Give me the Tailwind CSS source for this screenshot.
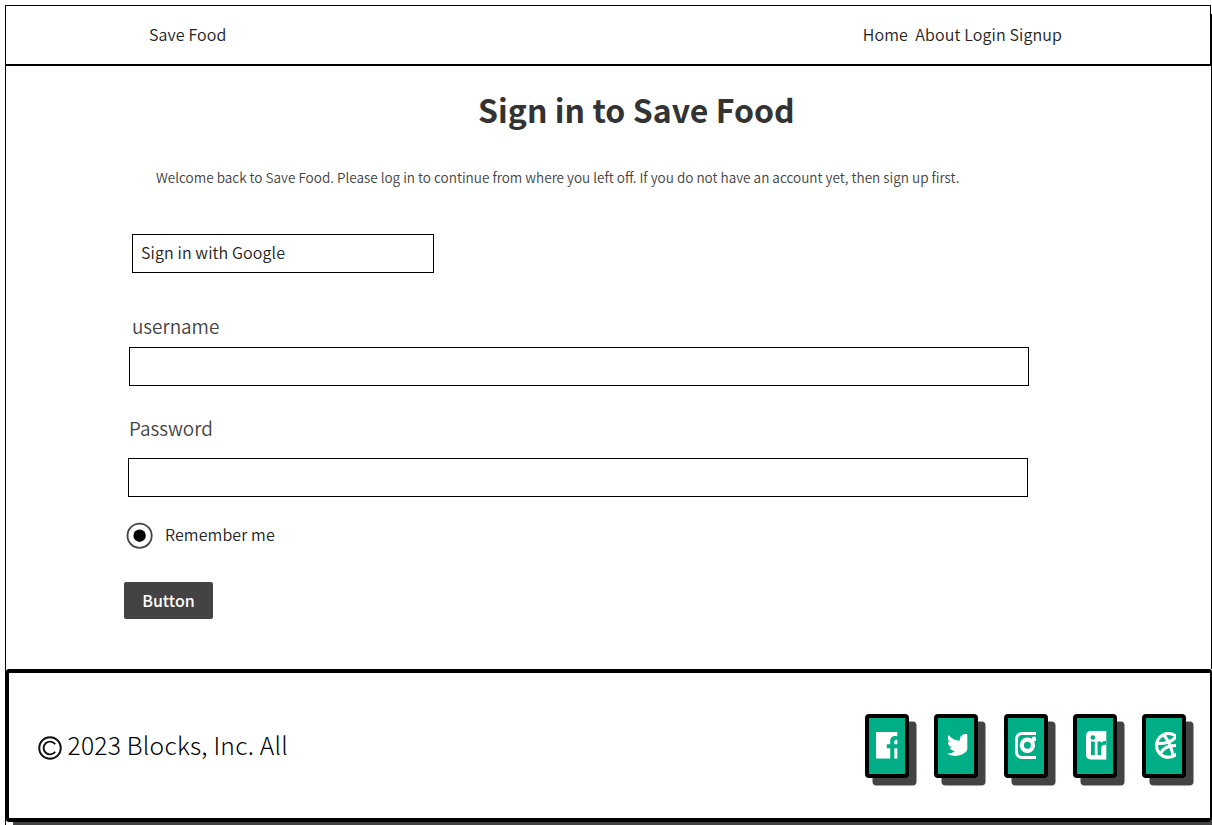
<!DOCTYPE html>
<html lang="en">
<head>
<meta charset="utf-8">
<title>Save Food</title>
<script src="https://cdn.jsdelivr.net/npm/@tailwindcss/browser@4"></script>
</head>
<body class="bg-white">
<div class="flex h-[825px] w-[1212px] flex-col overflow-hidden pt-[5px] pl-[5px] font-['Noto_Sans_CJK_JP','Noto_Sans_CJK_SC',sans-serif] font-[350] text-[#222]">
  <header class="flex h-[61px] shrink-0">
    <nav class="flex w-[1206px] items-center justify-between border border-b-2 border-black pr-[148px] pb-[2px] pl-[143px] text-base leading-6 tracking-[0.12px] whitespace-pre">
      <a>Save Food</a>
      <span>Home  About Login Signup</span>
    </nav>
    <div class="mt-[9px] w-px bg-black"></div>
  </header>
  <main class="h-[603px] shrink-0 border-x border-black pl-[118px]">
    <h1 class="ml-[354px] pt-[19px] text-[32px] leading-[48px] font-bold tracking-[0.04px] whitespace-nowrap text-[#333]">Sign in to Save Food</h1>
    <p class="mt-[34px] ml-[32px] text-[13.55px] leading-5 whitespace-nowrap text-[#444]">Welcome back to Save Food. Please log in to continue from where you left off. If you do not have an account yet, then sign up first.</p>
    <div class="mt-[47px] ml-2 flex h-[39px] w-[302px] items-center border border-black pb-[3px] pl-2 text-base tracking-[0.11px]">Sign in with Google</div>
    <label class="mt-[39px] ml-2 block text-[18.9px] leading-7 text-[#444]">username</label>
    <div class="mt-[7px] ml-[5px] h-[39px] w-[900px] border border-black"></div>
    <label class="mt-[28px] ml-[5px] block text-[18.9px] leading-7 text-[#444]">Password</label>
    <div class="mt-[16px] ml-[4px] h-[39px] w-[900px] border border-black"></div>
    <div class="mt-[25px] ml-[2px] flex h-[27px] items-center gap-[12px] text-base tracking-[0.11px]">
      <svg class="size-[27px]" viewBox="0 0 27 27"><circle cx="13.6" cy="13.7" r="12.1" fill="none" stroke="#444" stroke-width="1.8"/><circle cx="13.6" cy="13.7" r="6.2" fill="#000"/></svg>
      <span class="pb-[4px]">Remember me</span>
    </div>
    <button class="mt-[33px] flex h-[37px] w-[89px] items-center justify-center rounded-[2px] bg-[#434343] pb-[2px] text-base font-medium text-white">Button</button>
  </main>
  <div class="h-[156px] shrink-0 border-l border-black">
    <footer class="flex h-[153px] w-[1206px] items-center rounded-[3px] border-4 border-r-2 border-l-3 border-black pl-[29px] shadow-[7px_8px_0_#434343]">
      <svg class="mt-[4px] size-6 shrink-0" viewBox="0 0 24 24" fill="none" stroke="#111" stroke-width="1.9"><circle cx="12" cy="12" r="10.8"/><path d="M17.2 8.300A6.400 6.400 0 1 0 17.200 15.700"/></svg>
      <span class="ml-[5.500px] w-[797.500px] pb-[3px] text-[24.6px] leading-9 font-light tracking-[0.24px] whitespace-nowrap text-black">2023 Blocks, Inc. All</span>
      <div class="flex shrink-0 gap-[25.3px] text-white">
        <a class="h-16 w-11 rounded-[4px] border-4 border-black bg-[#00ae86] shadow-[7.5px_7.5px_0_#434343]">
          <svg class="block h-14 w-9" viewBox="0 0 36 56" fill="currentColor"><svg x="7" y="14" width="21.3" height="26.7" viewBox="3 3 14.4 18"><path d="M15.4 21v-6.97h2.33l.35-2.7H15.4V9.6c0-.79.22-1.32 1.34-1.32h1.44V5.86a19 19 0 0 0-2.1-.11c-2.06 0-3.48 1.26-3.48 3.58v2h-2.33v2.7h2.33V21H3.6a.6.6 0 0 1-.6-.6V3.6a.6.6 0 0 1 .6-.6H20v18z"/></svg></svg>
        </a>
        <a class="h-16 w-11 rounded-[4px] border-4 border-black bg-[#00ae86] shadow-[7.5px_7.5px_0_#434343]">
          <svg class="block h-14 w-9" viewBox="0 0 36 56" fill="currentColor"><svg x="8.7" y="16" width="20.6" height="22" viewBox="1.78 3.7 15.6 16.6"><path d="M22.162 5.656a8.384 8.384 0 0 1-2.402.658A4.196 4.196 0 0 0 21.6 4c-.82.488-1.719.83-2.656 1.015a4.182 4.182 0 0 0-7.126 3.814 11.874 11.874 0 0 1-8.62-4.37 4.168 4.168 0 0 0-.566 2.103c0 1.45.738 2.731 1.86 3.481a4.168 4.168 0 0 1-1.894-.523v.052a4.185 4.185 0 0 0 3.355 4.101 4.21 4.21 0 0 1-1.89.072A4.185 4.185 0 0 0 7.97 16.65a8.394 8.394 0 0 1-6.191 1.732 11.83 11.83 0 0 0 6.41 1.88c7.693 0 11.9-6.373 11.9-11.9 0-.18-.005-.362-.013-.54a8.496 8.496 0 0 0 2.087-2.165z"/></svg></svg>
        </a>
        <a class="h-16 w-11 rounded-[4px] border-4 border-black bg-[#00ae86] shadow-[7.5px_7.5px_0_#434343]">
          <svg class="block h-14 w-9" viewBox="0 0 36 56" fill="none" stroke="currentColor"><svg x="7" y="14" width="21" height="27" viewBox="0 0 21 27"><rect x="1.500" y="1.500" width="24" height="24" rx="5.500" stroke-width="3"/><circle cx="12.4" cy="13.3" r="5.6" stroke-width="4.2"/><circle cx="19" cy="7" r="2.4" fill="currentColor" stroke="none"/></svg></svg>
        </a>
        <a class="h-16 w-11 rounded-[4px] border-4 border-black bg-[#00ae86] shadow-[7.5px_7.5px_0_#434343]">
          <svg class="block h-14 w-9" viewBox="0 0 36 56"><svg x="9" y="12.7" width="20.3" height="29" viewBox="0 0 20.3 29"><rect width="29" height="29" rx="5" fill="currentColor"/><g fill="#00ae86"><circle cx="6.8" cy="6.8" r="2.3"/><path d="M5 10.700h3.800v13.500H5zM11.500 10.700h3.600v1.800c1-1.400 2.400-2.200 3.900-2.200h1.300v3.800c-3.200-.5-5.100.7-5.100 3.600v6.500h-3.700z"/></g></svg></svg>
        </a>
        <a class="h-16 w-11 rounded-[4px] border-4 border-black bg-[#00ae86] shadow-[7.5px_7.5px_0_#434343]">
          <svg class="block h-14 w-9" viewBox="0 0 36 56" fill="none" stroke="currentColor" stroke-width="3"><svg x="9" y="14" width="21" height="27" viewBox="0 0 21 27"><circle cx="13.4" cy="13.4" r="11.900"/><path d="M8.500 2.800C13.500 8.500 17 16 18 24.500M1.500 11.500C9 11.900 17 9.700 21.500 4.500M5 22C8.500 15.500 15 12.500 25 14"/></svg></svg>
        </a>
      </div>
    </footer>
  </div>
</div>
</body>
</html>
